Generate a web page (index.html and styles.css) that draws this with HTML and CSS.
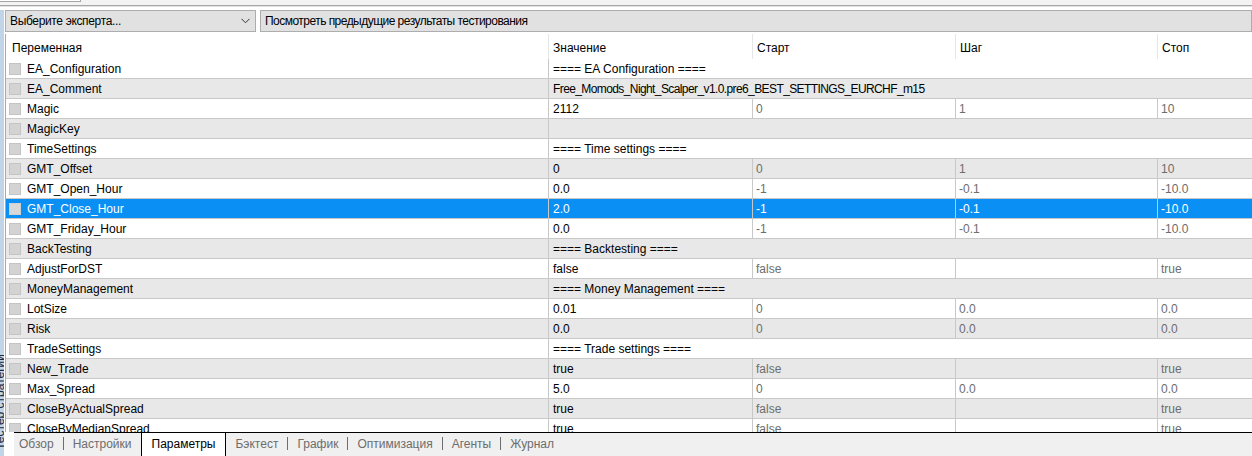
FILE: index.html
```html
<!DOCTYPE html>
<html lang="ru">
<head>
<meta charset="utf-8">
<title>Тестер стратегий</title>
<link rel="stylesheet" href="styles.css">
</head>
<body>
<div class="app">
  <div class="side"><span class="side-text">Тестер стратегий</span></div>
  <div class="main">
    <div class="topbar"><div class="topbox"></div></div>
    <div class="toolbar">
      <div class="select">
        <span class="tight-s">Выберите эксперта...</span>
        <svg class="chev" width="9" height="6" viewBox="0 0 9 6"><path d="M0.5 0.8 L4.5 4.8 L8.5 0.8" fill="none" stroke="#333" stroke-width="1"/></svg>
      </div>
      <div class="btn"><span class="tight">Посмотреть предыдущие результаты тестирования</span></div>
    </div>
    <div class="table">
      <div class="head">
        <div class="hc hname">Переменная</div>
        <div class="hc">Значение</div>
        <div class="hc">Старт</div>
        <div class="hc">Шаг</div>
        <div class="hc">Стоп</div>
      </div>
      <div class="rows">
        <div class="row"><div class="name"><i class="cb"></i>EA_Configuration</div><div class="val span">==== EA Configuration ====</div></div>
        <div class="row"><div class="name"><i class="cb"></i>EA_Comment</div><div class="val span"><span class="tight-c">Free_Momods_Night_Scalper_v1.0.pre6_BEST_SETTINGS_EURCHF_m15</span></div></div>
        <div class="row"><div class="name"><i class="cb"></i>Magic</div><div class="val">2112</div><div class="opt">0</div><div class="opt">1</div><div class="opt">10</div></div>
        <div class="row"><div class="name"><i class="cb"></i>MagicKey</div><div class="val span"></div></div>
        <div class="row"><div class="name"><i class="cb"></i>TimeSettings</div><div class="val span">==== Time settings ====</div></div>
        <div class="row"><div class="name"><i class="cb"></i>GMT_Offset</div><div class="val">0</div><div class="opt">0</div><div class="opt">1</div><div class="opt">10</div></div>
        <div class="row"><div class="name"><i class="cb"></i>GMT_Open_Hour</div><div class="val">0.0</div><div class="opt">-1</div><div class="opt">-0.1</div><div class="opt">-10.0</div></div>
        <div class="row sel"><div class="name"><i class="cb"></i>GMT_Close_Hour</div><div class="val">2.0</div><div class="opt">-1</div><div class="opt">-0.1</div><div class="opt">-10.0</div></div>
        <div class="row"><div class="name"><i class="cb"></i>GMT_Friday_Hour</div><div class="val">0.0</div><div class="opt">-1</div><div class="opt">-0.1</div><div class="opt">-10.0</div></div>
        <div class="row"><div class="name"><i class="cb"></i>BackTesting</div><div class="val span">==== Backtesting ====</div></div>
        <div class="row"><div class="name"><i class="cb"></i>AdjustForDST</div><div class="val">false</div><div class="opt">false</div><div class="opt"></div><div class="opt">true</div></div>
        <div class="row"><div class="name"><i class="cb"></i>MoneyManagement</div><div class="val span">==== Money Management ====</div></div>
        <div class="row"><div class="name"><i class="cb"></i>LotSize</div><div class="val">0.01</div><div class="opt">0</div><div class="opt">0.0</div><div class="opt">0.0</div></div>
        <div class="row"><div class="name"><i class="cb"></i>Risk</div><div class="val">0.0</div><div class="opt">0</div><div class="opt">0.0</div><div class="opt">0.0</div></div>
        <div class="row"><div class="name"><i class="cb"></i>TradeSettings</div><div class="val span">==== Trade settings ====</div></div>
        <div class="row"><div class="name"><i class="cb"></i>New_Trade</div><div class="val">true</div><div class="opt">false</div><div class="opt"></div><div class="opt">true</div></div>
        <div class="row"><div class="name"><i class="cb"></i>Max_Spread</div><div class="val">5.0</div><div class="opt">0</div><div class="opt">0.0</div><div class="opt">0.0</div></div>
        <div class="row"><div class="name"><i class="cb"></i>CloseByActualSpread</div><div class="val">true</div><div class="opt">false</div><div class="opt"></div><div class="opt">true</div></div>
        <div class="row"><div class="name"><i class="cb"></i>CloseByMedianSpread</div><div class="val">true</div><div class="opt">false</div><div class="opt"></div><div class="opt">true</div></div>
      </div>
    </div>
    <div class="tabs">
      <span class="tab">Обзор</span><span class="sep"></span>
      <span class="tab">Настройки</span>
      <span class="tab active">Параметры</span>
      <span class="tab">Бэктест</span><span class="sep"></span>
      <span class="tab">График</span><span class="sep"></span>
      <span class="tab">Оптимизация</span><span class="sep"></span>
      <span class="tab">Агенты</span><span class="sep"></span>
      <span class="tab">Журнал</span>
    </div>
  </div>
</div>
</body>
</html>
```
FILE: styles.css
```css
* { box-sizing: border-box; }
html, body { margin: 0; padding: 0; }
body {
  width: 1252px;
  height: 456px;
  overflow: hidden;
  background: #ffffff;
  font-family: "Liberation Sans", Arial, sans-serif;
  font-size: 12px;
  color: #000;
}
.app { display: flex; width: 1252px; height: 456px; }
.side {
  width: 4px;
  flex: none;
  background: #c2d4e8;
  overflow: hidden;
  display: flex;
  align-items: flex-end;
}
.side-text {
  writing-mode: vertical-rl;
  transform: rotate(180deg);
  font-size: 12px;
  line-height: 12px;
  margin-left: -6px;
  margin-bottom: 6px;
  white-space: nowrap;
  color: #1c2a3a;
}
.main {
  flex: 1;
  display: flex;
  flex-direction: column;
  padding-left: 1px;
  min-width: 0;
}
.topbar {
  height: 10px;
  flex: none;
  background: linear-gradient(#f3f3f3 0 5px, #a6a6a6 5px 6px, #e2e2e2 6px 7px, #ffffff 7px);
  margin-left: -5px;
}
.topbox {
  width: 81px;
  height: 2px;
  background: #fff;
  border-right: 1px solid #a6a6a6;
  border-bottom: 1px solid #a6a6a6;
}
.toolbar {
  display: flex;
  gap: 4px;
  height: 22px;
  flex: none;
}
.select, .btn {
  height: 22px;
  background: #e1e1e1;
  border: 1px solid #adadad;
  display: flex;
  align-items: center;
  padding-left: 4px;
  white-space: nowrap;
}
.select { width: 251px; justify-content: space-between; padding-right: 5px; }
.tight-s { letter-spacing: -0.35px; }
.tight { letter-spacing: -0.53px; }
.tight-c { letter-spacing: -0.6px; }
.chev { display: block; }
.btn { flex: 1; }
.table {
  flex: 1;
  min-height: 0;
  display: flex;
  flex-direction: column;
  border-left: 1px solid #a9a9a9;
  margin-top: 2px;
}
.head, .row {
  display: grid;
  grid-template-columns: 542px 204px 203px 202px 1fr;
}
.head { height: 25px; flex: none; }
.hc {
  display: flex;
  align-items: center;
  padding: 3px 0 0 4px;
}
.hc + .hc { border-left: 1px solid #e6e6e6; }
.hname { padding-left: 6px; }
.rows { flex: 1; min-height: 0; overflow: hidden; }
.row {
  height: 20px;
  border-bottom: 1px solid #c8c8c8;
  white-space: nowrap;
}
.row:nth-child(even) { background: #e8e8e8; }
.name {
  display: flex;
  align-items: center;
  padding-left: 3px;
  color: #000;
}
.cb {
  width: 12px;
  height: 12px;
  background: #d3d3d3;
  border: 1px solid #c4c4c4;
  margin-right: 6px;
  flex: none;
}
.val, .opt {
  display: flex;
  align-items: center;
  border-left: 1px solid #c8c8c8;
  padding-left: 4px;
  overflow: hidden;
}
.opt { color: #6d6d6d; padding-left: 3px; }
.span { grid-column: 2 / -1; }
.row.sel { background: #0a8ff4; }
.row.sel .name, .row.sel .val, .row.sel .opt { color: #ffffff; }
.row.sel .cb { background: #d8d8d8; border-color: #cfcfcf; }
.tabs {
  height: 24px;
  flex: none;
  border-top: 1px solid #000;
  background: #f0f0f0;
  margin-left: 9px;
  display: flex;
  align-items: stretch;
  gap: 9px;
  padding-left: 5px;
}
.tab {
  display: flex;
  align-items: center;
  color: #6d6d6d;
  padding-bottom: 1px;
}
.tab.active {
  background: #ffffff;
  color: #000;
  border-left: 1px solid #000;
  border-right: 1px solid #000;
  border-top: 1px solid #000;
  padding: 0 10px 1px;
  margin-top: -1px;
}
.sep {
  width: 1px;
  background: #6d6d6d;
  margin: 4px 0 6px;
}
```
